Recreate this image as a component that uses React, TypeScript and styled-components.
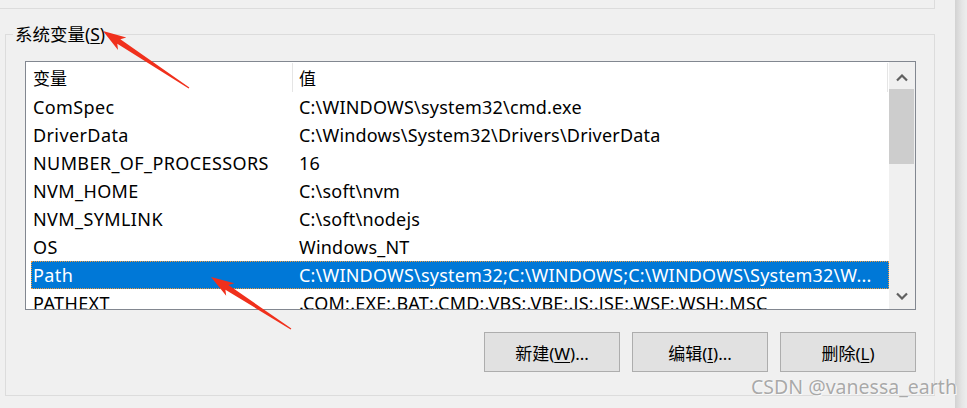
import React from "react";
import styled, { createGlobalStyle } from "styled-components";

const GlobalStyle = createGlobalStyle`
  html, body {
    margin: 0;
    padding: 0;
    background: #f0f0f0;
    overflow: hidden;
  }
  body {
    font-family: "Noto Sans", "Noto Sans CJK SC", sans-serif;
    font-size: 18px;
    color: #000;
  }
`;

const Page = styled.div`
  display: flex;
  width: 967px;
  height: 408px;
  position: relative;
`;

const Window = styled.div`
  width: 955px;
  height: 408px;
  background: #f0f0f0;
  position: relative;
`;

const WindowEdge = styled.div`
  flex: 1;
  background: linear-gradient(to right, #d2d2d2, #e6e6e6 60%, #ededed);
`;

const UpperGroupTail = styled.div`
  width: 934px;
  height: 8px;
  border-bottom: 1px solid #dcdcdc;
  border-right: 1px solid #dcdcdc;
`;

const GroupBox = styled.fieldset`
  margin: 14px 20px 0 5px;
  padding: 0 0 23px 0;
  border: 1px solid #dcdcdc;
  min-width: 0;
`;

const Legend = styled.legend`
  margin-left: 7px;
  padding: 0 2px;
  line-height: 22px;
  font-size: 17.5px;
`;

const Key = styled.span`
  text-decoration: underline;
  text-underline-offset: 2px;
`;

const ListBox = styled.div`
  display: flex;
  height: 247px;
  margin: 16px 18px 0 19px;
  border: 1px solid #828790;
  background: #fff;
`;

const ListContent = styled.div`
  flex: 1;
  overflow: hidden;
`;

const Header = styled.div`
  display: grid;
  grid-template-columns: 262px 595px;
  height: 31px;
  padding-left: 5px;
  font-size: 17px;
`;

const HeaderCell = styled.div<{ $first?: boolean }>`
  display: flex;
  align-items: center;
  padding-left: ${(p) => (p.$first ? "2px" : "6px")};
  border-right: 1px solid #e5e5e5;
  margin: 1px 0;
`;

const Row = styled.div<{ $selected?: boolean }>`
  display: grid;
  grid-template-columns: 262px 1fr;
  height: 28px;
  margin-left: 5px;
  box-sizing: border-box;
  background: ${(p) => (p.$selected ? "#0078d7" : "transparent")};
  color: ${(p) => (p.$selected ? "#fff" : "#000")};
  border: 1px dotted ${(p) => (p.$selected ? "#f39a3c" : "transparent")};
`;

const Cell = styled.div<{ $first?: boolean }>`
  display: flex;
  align-items: center;
  padding-left: ${(p) => (p.$first ? "1px" : "5px")};
  letter-spacing: ${(p) => (p.$first ? "0.4px" : "0.2px")};
  white-space: nowrap;
  overflow: hidden;
`;

const ScrollBar = styled.div`
  width: 26px;
  display: flex;
  flex-direction: column;
  background: #f0f0f0;
`;

const ScrollButton = styled.div<{ $down?: boolean }>`
  height: 27px;
  display: flex;
  justify-content: center;
  align-items: center;
  padding-top: ${(p) => (p.$down ? "0" : "4px")};
  box-sizing: border-box;
`;

const Thumb = styled.div`
  height: 75px;
  margin: 0 1px 0 0;
  background: #cdcdcd;
`;

const Track = styled.div`
  flex: 1;
`;

const ButtonRow = styled.div`
  display: flex;
  justify-content: flex-end;
  gap: 12px;
  margin: 22px 18px 0 0;
`;

const Button = styled.button`
  width: 136px;
  height: 40px;
  background: #e1e1e1;
  border: 1px solid #adadad;
  font-family: inherit;
  font-size: 17px;
  color: #000;
  padding: 0;
`;

const Watermark = styled.div`
  position: absolute;
  left: 751px;
  top: 373px;
  font-size: 19.5px;
  color: #a9a9a9;
  white-space: nowrap;
  text-shadow: 0 0 1px #fff, 1px 1px 0 #fafafa;
`;

const Overlay = styled.svg`
  position: absolute;
  left: 0;
  top: 0;
  pointer-events: none;
`;

const rows: { name: string; value: string; selected?: boolean }[] = [
  { name: "ComSpec", value: String.raw`C:\WINDOWS\system32\cmd.exe` },
  { name: "DriverData", value: String.raw`C:\Windows\System32\Drivers\DriverData` },
  { name: "NUMBER_OF_PROCESSORS", value: "16" },
  { name: "NVM_HOME", value: String.raw`C:\soft\nvm` },
  { name: "NVM_SYMLINK", value: String.raw`C:\soft\nodejs` },
  { name: "OS", value: "Windows_NT" },
  {
    name: "Path",
    value: String.raw`C:\WINDOWS\system32;C:\WINDOWS;C:\WINDOWS\System32\W...`,
    selected: true,
  },
  { name: "PATHEXT", value: ".COM;.EXE;.BAT;.CMD;.VBS;.VBE;.JS;.JSE;.WSF;.WSH;.MSC" },
];

function Chevron({ down }: { down?: boolean }) {
  return (
    <svg width="12" height="8" viewBox="0 0 12 8">
      <polyline
        points={down ? "1,1.5 6,6.5 11,1.5" : "1,6.5 6,1.5 11,6.5"}
        fill="none"
        stroke="#606060"
        strokeWidth="2.2"
      />
    </svg>
  );
}

// red annotation arrow, drawn from tail to tip
function Arrow({ x1, y1, x2, y2 }: { x1: number; y1: number; x2: number; y2: number }) {
  const len = Math.hypot(x2 - x1, y2 - y1);
  const angle = (Math.atan2(y2 - y1, x2 - x1) * 180) / Math.PI;
  const pts = [
    [0, -0.6],
    [len - 19, -2.8],
    [len - 23, -7.5],
    [len, 0],
    [len - 23, 7.5],
    [len - 19, 2.8],
    [0, 0.6],
  ]
    .map((p) => p.join(","))
    .join(" ");
  return (
    <polygon
      points={pts}
      fill="#f0301c"
      transform={`translate(${x1} ${y1}) rotate(${angle})`}
    />
  );
}

export default function App() {
  return (
    <Page>
      <GlobalStyle />
      <Window>
        <UpperGroupTail />
        <GroupBox>
          <Legend>
            系统变量(<Key>S</Key>)
          </Legend>
          <ListBox>
            <ListContent>
              <Header>
                <HeaderCell $first>变量</HeaderCell>
                <HeaderCell>值</HeaderCell>
              </Header>
              {rows.map((r) => (
                <Row key={r.name} $selected={r.selected}>
                  <Cell $first>{r.name}</Cell>
                  <Cell>{r.value}</Cell>
                </Row>
              ))}
            </ListContent>
            <ScrollBar>
              <ScrollButton>
                <Chevron />
              </ScrollButton>
              <Thumb />
              <Track />
              <ScrollButton $down>
                <Chevron down />
              </ScrollButton>
            </ScrollBar>
          </ListBox>
          <ButtonRow>
            <Button>
              新建(<Key>W</Key>)...
            </Button>
            <Button>
              编辑(<Key>I</Key>)...
            </Button>
            <Button>
              删除(<Key>L</Key>)
            </Button>
          </ButtonRow>
        </GroupBox>
        <Watermark>CSDN @vanessa_earth</Watermark>
      </Window>
      <WindowEdge />
      <Overlay width="967" height="408">
        <Arrow x1={189} y1={88} x2={103} y2={31} />
        <Arrow x1={291} y1={329} x2={211} y2={277} />
      </Overlay>
    </Page>
  );
}
